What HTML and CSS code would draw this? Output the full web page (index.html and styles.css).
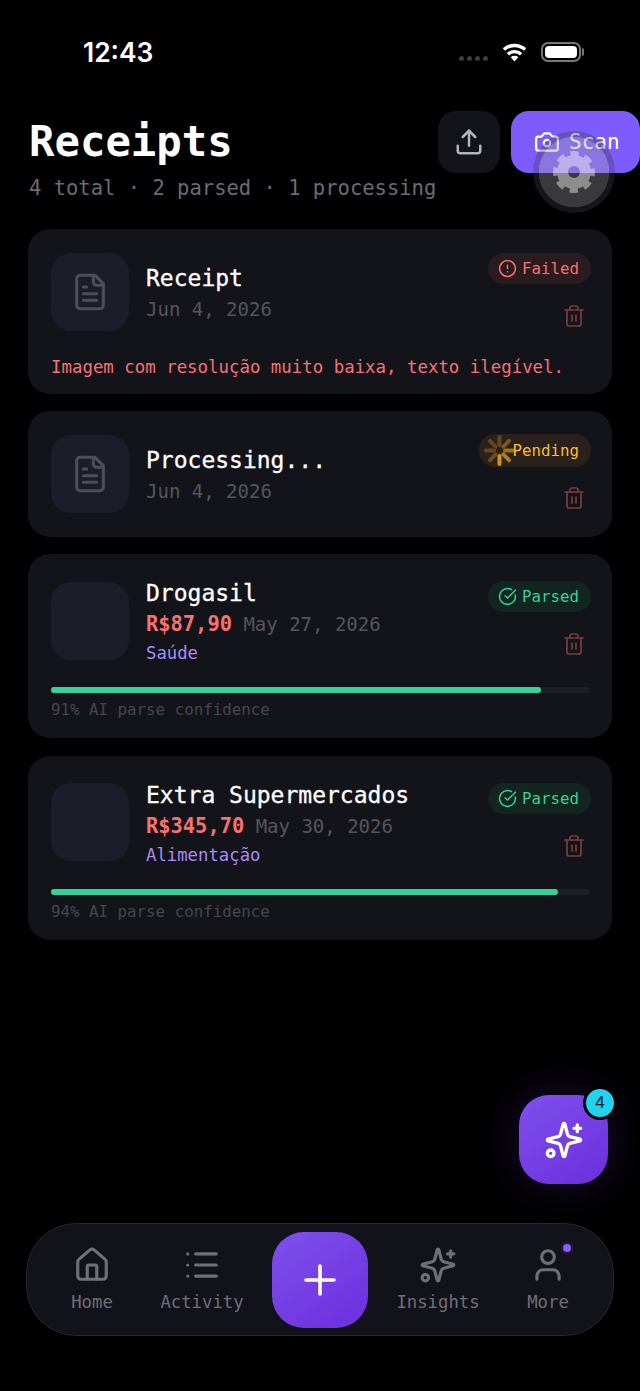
FILE: index.html
```html
<!DOCTYPE html>
<html>
<head>
<meta charset="utf-8">
<title>Receipts</title>
<link rel="stylesheet" href="styles.css">
</head>
<body>
<svg class="defs" width="0" height="0">
    <symbol id="i-doc" viewBox="0 0 24 24"><path d="M15 2H6a2 2 0 0 0-2 2v16a2 2 0 0 0 2 2h12a2 2 0 0 0 2-2V7Z"/><path d="M14 2v4a2 2 0 0 0 2 2h4"/><path d="M10 9H8M16 13H8M16 17H8"/></symbol>
    <symbol id="i-trash" viewBox="0 0 24 24"><path d="M3 6h18"/><path d="M19 6v14a2 2 0 0 1-2 2H7a2 2 0 0 1-2-2V6"/><path d="M8 6V4a2 2 0 0 1 2-2h4a2 2 0 0 1 2 2v2"/><path d="M10 11v6M14 11v6"/></symbol>
    <symbol id="i-alert" viewBox="0 0 24 24"><circle cx="12" cy="12" r="10"/><path d="M12 8v4M12 16h.01"/></symbol>
    <symbol id="i-check" viewBox="0 0 24 24"><path d="M21.8 10A10 10 0 1 1 17 3.3"/><path d="m9 11 3 3L22 4"/></symbol>
    <symbol id="i-sparkle" viewBox="0 0 24 24"><path d="M9.937 15.5A2 2 0 0 0 8.5 14.063l-6.135-1.582a.5.5 0 0 1 0-.962L8.5 9.936A2 2 0 0 0 9.937 8.5l1.582-6.135a.5.5 0 0 1 .963 0L14.063 8.5A2 2 0 0 0 15.5 9.937l6.135 1.581a.5.5 0 0 1 0 .964L15.5 14.063a2 2 0 0 0-1.437 1.437l-1.582 6.135a.5.5 0 0 1-.963 0z"/><path d="M20 3v4M22 5h-4"/><circle cx="4" cy="20" r="2"/></symbol>
</svg>

<div class="screen">
    <div class="statusbar">
        <span class="clock">12:43</span>
        <div class="status-icons">
            <div class="signal"><i></i><i></i><i></i><i></i></div>
            <svg class="wifi" width="27" height="20" viewBox="0 0 26 20">
                <path d="M13 19.5 9.2 15.2a5.6 5.6 0 0 1 7.6 0Z" fill="#fff"/>
                <path d="M6.4 12.2a9.8 9.8 0 0 1 13.2 0M2.4 7.6a15.6 15.6 0 0 1 21.2 0" fill="none" stroke="#fff" stroke-width="3.4"/>
            </svg>
            <div class="battery"><div class="battery-fill"></div></div>
        </div>
    </div>

    <header class="header">
        <div class="heading">
            <h1>Receipts</h1>
            <p class="summary">4 total · 2 parsed · 1 processing</p>
        </div>
        <div class="actions">
            <button class="btn-upload">
                <svg class="icon" width="30" height="30" viewBox="0 0 24 24"><path d="M12 15V3"/><path d="m7 8 5-5 5 5"/><path d="M21 15v4a2 2 0 0 1-2 2H5a2 2 0 0 1-2-2v-4"/></svg>
            </button>
            <button class="btn-scan">
                <svg class="icon" width="26" height="26" viewBox="0 0 24 24"><path d="M14.5 4h-5L7 7H4a2 2 0 0 0-2 2v9a2 2 0 0 0 2 2h16a2 2 0 0 0 2-2V9a2 2 0 0 0-2-2h-3z"/><circle cx="12" cy="13" r="3"/></svg>
                Scan
            </button>
        </div>
    </header>

    <main class="list">
        <section class="card">
            <div class="row">
                <div class="thumb"><svg class="icon doc"><use href="#i-doc"/></svg></div>
                <div class="info">
                    <div class="title">Receipt</div>
                    <div class="meta"><span class="date">Jun 4, 2026</span></div>
                </div>
                <div class="side">
                    <span class="badge failed"><svg class="icon"><use href="#i-alert"/></svg>Failed</span>
                    <svg class="icon trash"><use href="#i-trash"/></svg>
                </div>
            </div>
            <p class="error">Imagem com resolução muito baixa, texto ilegível.</p>
        </section>

        <section class="card">
            <div class="row">
                <div class="thumb"><svg class="icon doc"><use href="#i-doc"/></svg></div>
                <div class="info">
                    <div class="title">Processing...</div>
                    <div class="meta"><span class="date">Jun 4, 2026</span></div>
                </div>
                <div class="side">
                    <span class="badge pending">
                        <svg class="spinner" width="33" height="33" viewBox="0 0 33 33">
                            <path d="M16.5 3v8" opacity=".3"/>
                            <path d="M16.5 3v8" opacity=".42" transform="rotate(45 16.5 16.5)"/>
                            <path d="M16.5 3v8" opacity=".6" transform="rotate(90 16.5 16.5)"/>
                            <path d="M16.5 3v8" opacity=".68" transform="rotate(135 16.5 16.5)"/>
                            <path d="M16.5 3v8" opacity=".85" transform="rotate(180 16.5 16.5)"/>
                            <path d="M16.5 3v8" opacity=".32" transform="rotate(225 16.5 16.5)"/>
                            <path d="M16.5 3v8" opacity=".3" transform="rotate(270 16.5 16.5)"/>
                            <path d="M16.5 3v8" opacity=".28" transform="rotate(315 16.5 16.5)"/>
                        </svg>Pending</span>
                    <svg class="icon trash"><use href="#i-trash"/></svg>
                </div>
            </div>
        </section>

        <section class="card">
            <div class="row">
                <div class="thumb"></div>
                <div class="info">
                    <div class="title">Drogasil</div>
                    <div class="meta"><span class="price">R$87,90</span> <span class="date">May 27, 2026</span></div>
                    <div class="category">Saúde</div>
                </div>
                <div class="side">
                    <span class="badge parsed"><svg class="icon"><use href="#i-check"/></svg>Parsed</span>
                    <svg class="icon trash"><use href="#i-trash"/></svg>
                </div>
            </div>
            <div class="bar"><div class="bar-fill" style="width: 91%"></div></div>
            <div class="confidence">91% AI parse confidence</div>
        </section>

        <section class="card">
            <div class="row">
                <div class="thumb"></div>
                <div class="info">
                    <div class="title">Extra Supermercados</div>
                    <div class="meta"><span class="price">R$345,70</span> <span class="date">May 30, 2026</span></div>
                    <div class="category">Alimentação</div>
                </div>
                <div class="side">
                    <span class="badge parsed"><svg class="icon"><use href="#i-check"/></svg>Parsed</span>
                    <svg class="icon trash"><use href="#i-trash"/></svg>
                </div>
            </div>
            <div class="bar"><div class="bar-fill" style="width: 94%"></div></div>
            <div class="confidence">94% AI parse confidence</div>
        </section>
    </main>

    <nav class="tabbar">
        <a class="tab">
            <svg class="icon" width="38" height="38" viewBox="0 0 24 24"><path d="M15 21v-8a1 1 0 0 0-1-1h-4a1 1 0 0 0-1 1v8"/><path d="M3 10a2 2 0 0 1 .709-1.528l7-6a2 2 0 0 1 2.582 0l7 6A2 2 0 0 1 21 10v9a2 2 0 0 1-2 2H5a2 2 0 0 1-2-2z"/></svg>
            Home
        </a>
        <a class="tab">
            <svg class="icon" width="38" height="38" viewBox="0 0 24 24"><path d="M3 5h.01M3 12h.01M3 19h.01M8 5h13M8 12h13M8 19h13"/></svg>
            Activity
        </a>
        <button class="btn-add">
            <svg class="icon" width="36" height="36" viewBox="0 0 36 36"><path d="M18 4v28M4 18h28"/></svg>
        </button>
        <a class="tab">
            <svg class="icon" width="38" height="38"><use href="#i-sparkle"/></svg>
            Insights
        </a>
        <a class="tab">
            <svg class="icon" width="38" height="38" viewBox="0 0 24 24"><path d="M19 21v-2a4 4 0 0 0-4-4H9a4 4 0 0 0-4 4v2"/><circle cx="12" cy="7" r="4"/></svg>
            More
            <span class="tab-dot"></span>
        </a>
    </nav>

    <button class="fab">
        <svg class="icon" width="40" height="40"><use href="#i-sparkle"/></svg>
        <span class="fab-count">4</span>
    </button>

    <div class="gear-overlay">
        <svg class="gear" width="44" height="44" viewBox="0 0 44 44">
            <circle class="gear-body" cx="22" cy="22" r="11.5"/>
            <circle class="gear-teeth" cx="22" cy="22" r="18"/>
        </svg>
    </div>
</div>
</body>
</html>
```

FILE: styles.css
```css
* {
    box-sizing: border-box;
}

body {
    margin: 0;
    background-color: #000;
    color: #fff;
    font-family: "DejaVu Sans Mono", "Liberation Mono", monospace;
}

.defs {
    position: absolute;
}

.screen {
    position: relative;
    display: flex;
    flex-direction: column;
    height: 1391px;
    overflow: hidden;
}

.icon {
    fill: none;
    stroke: currentColor;
    stroke-width: 2;
    stroke-linecap: round;
    stroke-linejoin: round;
}

/* status bar */
.statusbar {
    display: flex;
    justify-content: space-between;
    align-items: center;
    height: 103px;
    padding: 0 59px 0 83px;
}

.clock {
    font-family: Inter, sans-serif;
    font-size: 26.4px;
    font-weight: 600;
}

.status-icons {
    display: flex;
    align-items: center;
    gap: 13px;
}

.signal {
    display: flex;
    gap: 3px;
    margin-top: 14px;
}

.signal i {
    width: 5px;
    height: 5px;
    border-radius: 50%;
    background-color: #3c3c40;
}

.battery {
    position: relative;
    width: 40px;
    height: 20px;
    padding: 2px;
    border: 2px solid #77777c;
    border-radius: 7px;
}

.battery::after {
    content: "";
    position: absolute;
    top: 4px;
    right: -5px;
    width: 2px;
    height: 8px;
    border-radius: 0 2px 2px 0;
    background-color: #77777c;
}

.battery-fill {
    height: 100%;
    border-radius: 4px;
    background-color: #fff;
}

/* header */
.header {
    display: flex;
    justify-content: space-between;
    height: 126px;
    padding: 8px 0 0 29px;
}

.heading {
    padding-top: 2px;
}

h1 {
    margin: 0;
    font-size: 42.3px;
    line-height: 58px;
    font-weight: bold;
}

.summary {
    margin: 4px 0 0;
    font-size: 20.5px;
    line-height: 26px;
    color: #6b6b73;
}

.actions {
    display: flex;
    gap: 11px;
    height: 62px;
}

.btn-upload {
    display: flex;
    align-items: center;
    justify-content: center;
    width: 62px;
    border: none;
    border-radius: 18px;
    background-color: #13141a;
    color: #b4b4b8;
}

.btn-scan {
    display: flex;
    align-items: center;
    gap: 9px;
    width: 129px;
    padding: 0 0 0 23px;
    border: none;
    border-radius: 18px;
    background-color: #7c5cfc;
    color: #fff;
    font-family: inherit;
    font-size: 21px;
}

/* receipt cards */
.list {
    display: flex;
    flex-direction: column;
    gap: 17.2px;
    padding: 0 28px;
}

.card {
    padding: 23px;
    border-radius: 22px;
    background-color: #13141a;
}

.row {
    display: flex;
    align-items: center;
    gap: 17px;
    min-height: 80px;
    margin-right: -2px;
}

.thumb {
    display: flex;
    align-items: center;
    justify-content: center;
    flex: none;
    width: 78px;
    height: 78px;
    border-radius: 20px;
    background-color: #1c1d28;
}

.doc {
    width: 40px;
    height: 40px;
    color: #4e4e55;
    stroke-width: 1.8;
}

.info {
    flex: 1;
}

.title {
    margin-bottom: -1px;
    padding-top: 1px;
    font-size: 23px;
    line-height: 30px;
    -webkit-text-stroke: 0.3px #fff;
}

.meta {
    margin-top: 3px;
    font-size: 19px;
    line-height: 28px;
}

.date {
    color: #55555c;
}

.price {
    font-size: 20.4px;
    font-weight: bold;
    color: #f87171;
}

.category {
    margin-top: 3px;
    margin-bottom: -1px;
    font-size: 17.3px;
    line-height: 24px;
    color: #a78bfa;
}

.side {
    display: flex;
    flex-direction: column;
    align-items: flex-end;
    gap: 20px;
}

.badge {
    display: flex;
    align-items: center;
    gap: 5px;
    height: 31px;
    padding: 0 12px 0 10px;
    border-radius: 16px;
    font-size: 15.8px;
}

.badge .icon {
    width: 19px;
    height: 19px;
    stroke-width: 1.9;
}

.failed {
    background-color: #2a1b1e;
    color: #f87171;
}

.parsed {
    background-color: #13251f;
    color: #34d399;
}

.pending {
    gap: 0;
    height: 33px;
    margin: -1px 0;
    padding: 0 12px 0 4px;
    background-color: #2a201c;
    color: #fbbf24;
}

.spinner {
    flex: none;
    margin-right: -4px;
    fill: none;
    stroke: #f0a818;
    stroke-width: 4;
    stroke-linecap: round;
}

.trash {
    width: 24px;
    height: 24px;
    margin: 0 5px 4px 0;
    color: #7a3d40;
    stroke-width: 1.7;
}

.error {
    margin: 24px 0 -8px;
    font-size: 17.4px;
    line-height: 23px;
    color: #f87171;
}

.bar {
    height: 6px;
    margin-top: 23px;
    margin-right: -1px;
    border-radius: 3px;
    background-color: #1e1f26;
}

.bar-fill {
    height: 100%;
    border-radius: 3px;
    background-color: #34d399;
}

.confidence {
    margin-top: 8px;
    margin-bottom: -3px;
    font-size: 15.8px;
    line-height: 17px;
    color: #46464d;
}

/* bottom nav */
.tabbar {
    display: flex;
    align-items: center;
    justify-content: center;
    height: 113px;
    margin: auto 26px 55px;
    border: 1px solid #25262e;
    border-radius: 50px;
    background-color: #12131a;
}

.tab {
    position: relative;
    display: flex;
    flex-direction: column;
    align-items: center;
    gap: 7px;
    width: 110px;
    font-size: 17.3px;
    line-height: 22px;
    color: #6f6f76;
}

.btn-add {
    display: flex;
    align-items: center;
    justify-content: center;
    width: 96px;
    height: 96px;
    margin: 0 15px;
    border: none;
    border-radius: 32px;
    background: linear-gradient(145deg, #7f50ee, #6c2edc);
    color: #fff;
}

.btn-add .icon {
    stroke-width: 3.6;
}

.tab-dot {
    position: absolute;
    top: -2px;
    right: 32px;
    width: 8px;
    height: 8px;
    border-radius: 50%;
    background-color: #8b5cf6;
    box-shadow: 0 0 0 3px #1b1930;
}

/* floating bits */
.fab {
    position: absolute;
    top: 1095px;
    left: 519px;
    display: flex;
    align-items: center;
    justify-content: center;
    width: 89px;
    height: 89px;
    border: none;
    border-radius: 30px;
    background: linear-gradient(145deg, #7f50ee, #6c2edc);
    color: #fff;
    box-shadow: 0 0 44px rgba(124, 58, 237, 0.22);
}

.fab-count {
    position: absolute;
    top: -9px;
    right: -9px;
    width: 34px;
    height: 34px;
    border: 3px solid #000;
    border-radius: 50%;
    background-color: #22d3ee;
    color: #04181c;
    font-family: inherit;
    font-size: 17px;
    line-height: 28px;
    text-align: center;
}

.gear-overlay {
    position: absolute;
    top: 131px;
    left: 533px;
    display: flex;
    align-items: center;
    justify-content: center;
    width: 82px;
    height: 82px;
    border-radius: 50%;
    background: radial-gradient(circle, rgba(165, 165, 170, 0.35) 35px, rgba(60, 60, 80, 0.35) 35.5px);
}

.gear {
    opacity: 0.42;
    fill: none;
    stroke: #fff;
}

.gear-body {
    stroke-width: 11;
}

.gear-teeth {
    stroke-width: 6;
    stroke-dasharray: 8 6.137;
    stroke-dashoffset: 4;
}
```
